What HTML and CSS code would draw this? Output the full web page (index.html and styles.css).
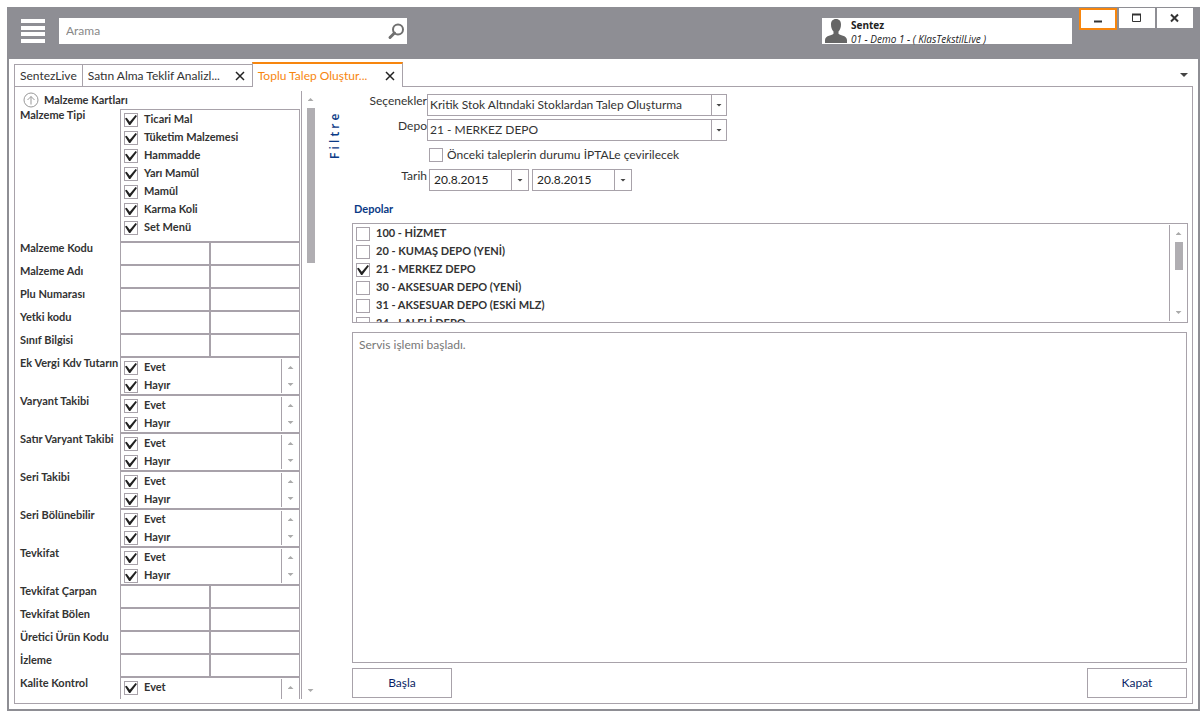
FILE: index.html
```html
<!DOCTYPE html>
<html lang="tr">
<head>
<meta charset="utf-8">
<title>Toplu Talep Oluşturma</title>
<link rel="stylesheet" href="styles.css">
</head>
<body>
<div class="window">
  <header class="titlebar">
    <button class="menu" aria-label="Menü"><span></span><span></span><span></span><span></span></button>
    <form class="search">
      <input type="text" placeholder="Arama" aria-label="Arama">
      <button type="button" aria-label="Ara"><svg width="18" height="18" viewBox="0 0 18 18"><circle cx="11" cy="7.500" r="5" fill="none" stroke="#707070" stroke-width="2"/><path d="M7.500 11 3 15.500" stroke="#707070" stroke-width="3" stroke-linecap="round"/></svg></button>
    </form>
    <div class="user">
      <svg width="24" height="25" viewBox="0 0 24 25"><path d="M12 1C8.600 1 7 3.300 7 6.500c0 3 1 5.500 2.500 7v2.300C8.700 17.500 1.200 17.300 1 22v3h22v-3c-.2-4.700-7.700-4.500-8.500-6.200v-2.300C16 12 17 9.500 17 6.500 17 3.300 15.400 1 12 1z" fill="#666"/></svg>
      <div class="user-text"><strong>Sentez</strong><em>01 - Demo 1 - ( KlasTekstilLive )</em></div>
    </div>
    <div class="window-buttons">
      <button class="active" aria-label="Küçült"><svg width="12" height="12" viewBox="0 0 12 12"><path d="M2 8.500h8" stroke="#333" stroke-width="2"/></svg></button>
      <button aria-label="Büyüt"><svg width="12" height="12" viewBox="0 0 12 12"><path d="M1.500 2v7.500h8V2M1 2.500h9" fill="none" stroke="#333"/><path d="M1 2.500h9" stroke="#333" stroke-width="2"/></svg></button>
      <button aria-label="Kapat"><svg width="12" height="12" viewBox="0 0 12 12"><path d="m2 2.500 7 7M9 2.500l-7 7" stroke="#333" stroke-width="2"/></svg></button>
    </div>
  </header>

  <nav class="tabs">
    <div class="tab"><a href="#">SentezLive</a></div>
    <div class="tab wide"><a href="#">Satın Alma Teklif Analizl...</a><button aria-label="Sekmeyi kapat"><svg width="10" height="10" viewBox="0 0 10 10"><path d="m1 1 8 8M9 1 1 9" stroke="#222" stroke-width="1.500"/></svg></button></div>
    <div class="tab current"><a href="#">Toplu Talep Oluştur...</a><button aria-label="Sekmeyi kapat"><svg width="10" height="10" viewBox="0 0 10 10"><path d="m1 1 8 8M9 1 1 9" stroke="#222" stroke-width="1.500"/></svg></button></div>
    <button class="tab-list" aria-label="Sekmeler"><span class="arrow down dark"></span></button>
  </nav>

  <main class="page">
    <aside class="filter">
      <div class="filter-body">
        <h2><svg width="16" height="16" viewBox="0 0 16 16"><circle cx="8" cy="8" r="7" fill="none" stroke="#999"/><path d="M8 12.500V4.500M4.500 8 8 4.500 11.500 8" fill="none" stroke="#999"/></svg>Malzeme Kartları</h2>
        <div class="row"><span class="name">Malzeme Tipi</span>
          <div class="box tall"><div class="items">
            <label><input type="checkbox" checked>Ticari Mal</label>
            <label><input type="checkbox" checked>Tüketim Malzemesi</label>
            <label><input type="checkbox" checked>Hammadde</label>
            <label><input type="checkbox" checked>Yarı Mamûl</label>
            <label><input type="checkbox" checked>Mamûl</label>
            <label><input type="checkbox" checked>Karma Koli</label>
            <label><input type="checkbox" checked>Set Menü</label>
          </div></div></div>
        <div class="row"><label class="name" for="kod">Malzeme Kodu</label><div class="pair"><input id="kod" type="text"><input type="text" aria-label="Malzeme Kodu bitiş"></div></div>
        <div class="row"><label class="name" for="adi">Malzeme Adı</label><div class="pair"><input id="adi" type="text"><input type="text" aria-label="Malzeme Adı bitiş"></div></div>
        <div class="row"><label class="name" for="plu">Plu Numarası</label><div class="pair"><input id="plu" type="text"><input type="text" aria-label="Plu Numarası bitiş"></div></div>
        <div class="row"><label class="name" for="yetki">Yetki kodu</label><div class="pair"><input id="yetki" type="text"><input type="text" aria-label="Yetki kodu bitiş"></div></div>
        <div class="row"><label class="name" for="sinif">Sınıf Bilgisi</label><div class="pair"><input id="sinif" type="text"><input type="text" aria-label="Sınıf Bilgisi bitiş"></div></div>
        <div class="row"><span class="name">Ek Vergi Kdv Tutarın</span><div class="box"><div class="items"><label><input type="checkbox" checked>Evet</label><label><input type="checkbox" checked>Hayır</label></div><div class="spin"><span class="arrow up"></span><span class="arrow down"></span></div></div></div>
        <div class="row"><span class="name">Varyant Takibi</span><div class="box"><div class="items"><label><input type="checkbox" checked>Evet</label><label><input type="checkbox" checked>Hayır</label></div><div class="spin"><span class="arrow up"></span><span class="arrow down"></span></div></div></div>
        <div class="row"><span class="name">Satır Varyant Takibi</span><div class="box"><div class="items"><label><input type="checkbox" checked>Evet</label><label><input type="checkbox" checked>Hayır</label></div><div class="spin"><span class="arrow up"></span><span class="arrow down"></span></div></div></div>
        <div class="row"><span class="name">Seri Takibi</span><div class="box"><div class="items"><label><input type="checkbox" checked>Evet</label><label><input type="checkbox" checked>Hayır</label></div><div class="spin"><span class="arrow up"></span><span class="arrow down"></span></div></div></div>
        <div class="row"><span class="name">Seri Bölünebilir</span><div class="box"><div class="items"><label><input type="checkbox" checked>Evet</label><label><input type="checkbox" checked>Hayır</label></div><div class="spin"><span class="arrow up"></span><span class="arrow down"></span></div></div></div>
        <div class="row"><span class="name">Tevkifat</span><div class="box"><div class="items"><label><input type="checkbox" checked>Evet</label><label><input type="checkbox" checked>Hayır</label></div><div class="spin"><span class="arrow up"></span><span class="arrow down"></span></div></div></div>
        <div class="row"><label class="name" for="carpan">Tevkifat Çarpan</label><div class="pair"><input id="carpan" type="text"><input type="text" aria-label="Tevkifat Çarpan bitiş"></div></div>
        <div class="row"><label class="name" for="bolen">Tevkifat Bölen</label><div class="pair"><input id="bolen" type="text"><input type="text" aria-label="Tevkifat Bölen bitiş"></div></div>
        <div class="row"><label class="name" for="uretici">Üretici Ürün Kodu</label><div class="pair"><input id="uretici" type="text"><input type="text" aria-label="Üretici Ürün Kodu bitiş"></div></div>
        <div class="row"><label class="name" for="izleme">İzleme</label><div class="pair"><input id="izleme" type="text"><input type="text" aria-label="İzleme bitiş"></div></div>
        <div class="row"><span class="name">Kalite Kontrol</span><div class="box"><div class="items"><label><input type="checkbox" checked>Evet</label></div><div class="spin"><span class="arrow up"></span></div></div></div>
      </div>
      <div class="scrollbar"><span class="arrow up"></span><div class="track"><div class="thumb"></div></div><span class="arrow down"></span></div>
      <div class="side-title">F i l t r e</div>
    </aside>

    <section class="content">
      <div class="form">
        <label for="secenek">Seçenekler</label>
        <div class="combo"><select id="secenek"><option>Kritik Stok Altındaki Stoklardan Talep Oluşturma</option></select><span class="drop"><span class="arrow down dark"></span></span></div>
        <label for="depo">Depo</label>
        <div class="combo"><select id="depo"><option>21 - MERKEZ DEPO</option></select><span class="drop"><span class="arrow down dark"></span></span></div>
        <label class="check"><input type="checkbox">Önceki taleplerin durumu İPTALe çevirilecek</label>
        <label for="tarih">Tarih</label>
        <div class="dates">
          <div class="date"><input id="tarih" type="text" value="20.8.2015"><button class="drop" aria-label="Takvim"><span class="arrow down dark"></span></button></div>
          <div class="date"><input type="text" value="20.8.2015" aria-label="Bitiş tarihi"><button class="drop" aria-label="Takvim"><span class="arrow down dark"></span></button></div>
        </div>
      </div>
      <h3>Depolar</h3>
      <div class="depots">
        <div class="items">
          <label><input type="checkbox">100 - HİZMET</label>
          <label><input type="checkbox">20 - KUMAŞ DEPO (YENİ)</label>
          <label><input type="checkbox" checked>21 - MERKEZ DEPO</label>
          <label><input type="checkbox">30 - AKSESUAR DEPO (YENİ)</label>
          <label><input type="checkbox">31 - AKSESUAR DEPO (ESKİ MLZ)</label>
          <label><input type="checkbox">34 - LALELİ DEPO</label>
        </div>
        <div class="scrollbar"><span class="arrow up"></span><div class="track"><div class="thumb"></div></div><span class="arrow down"></span></div>
      </div>
      <textarea class="log" aria-label="Servis günlüğü" readonly>Servis işlemi başladı.</textarea>
      <div class="actions"><button>Başla</button><button>Kapat</button></div>
    </section>
  </main>
</div>
</body>
</html>
```
FILE: styles.css
```css
* { box-sizing: border-box; }
body {
  margin: 0;
  background: #fff;
  color: #333;
  font: 12px/16px Lato, "Open Sans", sans-serif;
}
button, input, select, textarea { font: inherit; color: inherit; margin: 0; border-radius: 0; }
button { padding: 0; border: 0; background: none; }
a { color: inherit; text-decoration: none; }

.window {
  height: 100vh;
  padding: 7px 4px 6px 7px;
  display: flex;
  flex-direction: column;
}
.titlebar {
  flex: none;
  height: 52px;
  background: #8e8e94;
  display: flex;
  align-items: flex-start;
  padding: 0 7px 0 14px;
}
.menu {
  width: 24px;
  height: 24px;
  margin-top: 12px;
  display: flex;
  flex-direction: column;
  justify-content: space-between;
}
.menu span { height: 4px; background: #fff; }
.search {
  width: 348px;
  height: 26px;
  margin: 11px 0 0 14px;
  background: #fff;
  display: flex;
  align-items: center;
  padding: 0 2px 0 7px;
}
.search input { flex: 1; min-width: 0; border: 0; padding: 0; background: none; }
.search input::placeholder { color: #888; opacity: 1; }
.search button { height: 18px; }
.user {
  margin: 11px 7px 0 auto;
  width: 250px;
  height: 26px;
  background: #fff;
  display: flex;
  padding-left: 2px;
  font: 10px/14px "Open Sans", sans-serif;
  color: #222;
}
.user-text { padding-left: 3px; display: flex; flex-direction: column; }
.window-buttons { display: flex; gap: 2px; margin-top: 1px; }
.window-buttons button {
  width: 36px;
  height: 20px;
  background: #fff;
  display: grid;
  place-items: center;
}
.window-buttons .active { width: 38px; height: 22px; border: 2px solid #f7860e; }

.tabs {
  flex: none;
  display: flex;
  align-items: flex-end;
  height: 27px;
  padding: 0 6px 0 5px;
  border-left: 2px solid #8e8e94;
  border-right: 2px solid #8e8e94;
}
.tab {
  height: 22px;
  min-width: 67px;
  border: 1px solid #a8a2aa;
  border-right: 0;
  border-bottom: 0;
  padding: 0 5px;
  display: flex;
  align-items: center;
  justify-content: space-between;
}
.tab.wide { width: 170px; padding-right: 7px; }
.tab button { height: 10px; display: flex; }
.tab.current {
  width: 151px;
  height: 25px;
  padding: 0 7px 0 5px;
  border-top: 2px solid #f7860e;
  border-right: 1px solid #a8a2aa;
  color: #f7860e;
  background: #fff;
  margin-bottom: -1px;
  position: relative;
}
.tab-list { margin-left: auto; width: 16px; height: 22px; display: grid; place-items: center; }

.page {
  flex: 1;
  min-height: 0;
  display: flex;
  padding: 0 5px 5px;
  border: 2px solid #8e8e94;
  border-top: 0;
}
.filter, .content { border: 1px solid #a8a2aa; }
.filter {
  width: 334px;
  flex: none;
  border-right: 0;
  display: flex;
  padding: 4px 0;
}
.filter-body {
  width: 287px;
  border-right: 1px solid #a8a2aa;
  padding: 0 1px 0 5px;
  overflow: hidden;
  font-size: 11px;
  font-weight: 700;
}
.filter-body h2 {
  margin: 0;
  height: 18px;
  display: flex;
  align-items: center;
  gap: 5px;
  padding-left: 3px;
  font-size: 11px;
  font-weight: 700;
}
.row { display: grid; grid-template-columns: 100px 1fr; }
.name { line-height: 12px; white-space: nowrap; }
.box { border: 1px solid #a8a2aa; height: 38px; display: flex; background: #fff; }
.box.tall { height: 133px; }
.items { flex: 1; padding-left: 3px; overflow: hidden; }
.items label { display: flex; align-items: center; height: 18px; gap: 6px; }
input[type="checkbox"] {
  appearance: none;
  width: 14px;
  height: 14px;
  flex: none;
  border: 1px solid #a8a2aa;
  display: grid;
  place-items: center;
}
.items input[type="checkbox"] { margin-top: 2px; }
input[type="checkbox"]:checked::before {
  content: "";
  width: 12px;
  height: 10px;
  background: #222;
  clip-path: polygon(0 35%, 14% 28%, 40% 68%, 88% 0, 100% 10%, 44% 100%, 34% 100%);
}
.spin {
  width: 18px;
  margin: 1px 0;
  border-left: 1px solid #a8a2aa;
  display: flex;
  flex-direction: column;
  align-items: center;
  justify-content: space-between;
  padding: 7px 0;
}
.pair { display: grid; grid-template-columns: 1fr 1fr; }
.pair input { min-width: 0; height: 23px; border: 1px solid #a8a2aa; padding: 0 3px; }

.arrow { width: 6px; height: 3px; background: #aaa; }
.arrow.up { clip-path: polygon(50% 0, 100% 100%, 0 100%); }
.arrow.down { clip-path: polygon(0 0, 100% 0, 50% 100%); }
.arrow.dark { background: #444; }
.tab-list .arrow { width: 8px; height: 4px; }

.scrollbar {
  width: 17px;
  display: flex;
  flex-direction: column;
  align-items: center;
  padding: 7px 0;
}
.track { flex: 1; width: 8px; padding: 7px 0; }
.thumb { height: 27%; background: #b0aeb2; }
.side-title {
  writing-mode: vertical-rl;
  transform: rotate(180deg);
  height: 48px;
  margin: 20px 0 0 8px;
  font: 600 12px/16px "Open Sans", sans-serif;
  color: #0b3a86;
}

.content {
  flex: 1;
  min-width: 0;
  border-left: 0;
  display: flex;
  flex-direction: column;
  padding: 7px 4px 5px;
}
.form {
  display: grid;
  grid-template-columns: 75px 300px;
  grid-auto-rows: 22px;
  row-gap: 3px;
}
.form > label { text-align: right; line-height: 14px; }
.combo, .date { border: 1px solid #a8a2aa; display: flex; }
.combo select { appearance: none; flex: 1; min-width: 0; border: 0; padding: 0 2px; background: none; }
.drop { width: 15px; border-left: 1px solid #a8a2aa; display: grid; place-items: center; }
.date .drop { width: 17px; }
.form .check { grid-column: 2; display: flex; align-items: center; gap: 4px; padding-left: 2px; }
.dates { display: flex; gap: 3px; padding-left: 2px; }
.date { width: 100px; color: #222; }
.date input { flex: 1; min-width: 0; border: 0; padding: 0 4px; background: none; }
h3 { margin: 10px 0 6px 2px; font-size: 11px; line-height: 16px; font-weight: 700; color: #0b3a86; }
.depots {
  flex: none;
  height: 100px;
  border: 1px solid #a8a2aa;
  display: flex;
  font-size: 11px;
  font-weight: 700;
}
.depots .scrollbar { width: 18px; margin: 1px 0; border-left: 1px solid #a8a2aa; }
.depots .thumb { height: 45%; }
.log {
  flex: 1;
  min-height: 0;
  margin: 9px 1px 5px 0;
  padding: 4px 6px;
  border: 1px solid #a8a2aa;
  resize: none;
  color: #777;
}
.actions { flex: none; display: flex; justify-content: space-between; margin-right: 1px; }
.actions button { width: 100px; height: 30px; border: 1px solid #a8a2aa; color: #0a1f66; background: #fff; }
```
